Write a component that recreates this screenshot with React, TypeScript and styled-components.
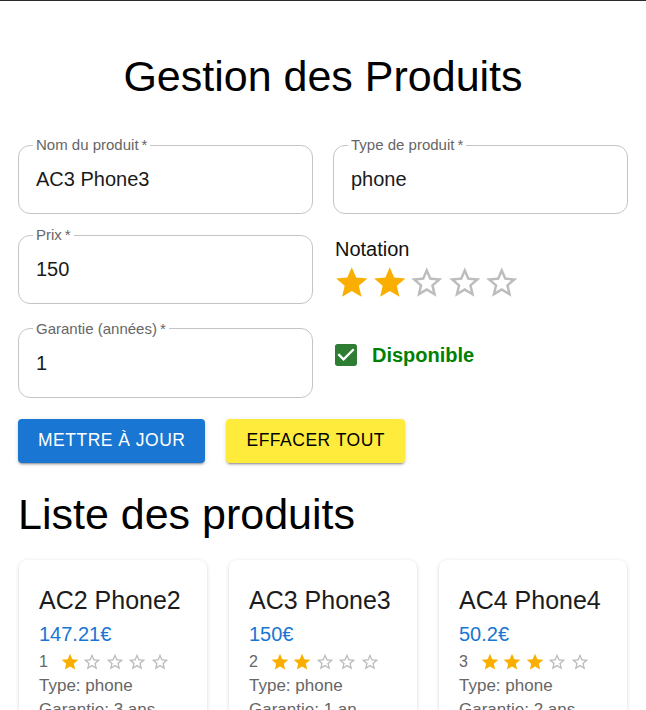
import React from "react";
import styled, { createGlobalStyle } from "styled-components";

const Global = createGlobalStyle`
  html, body { margin: 0; padding: 0; background: #fff; }
  body {
    border-top: 1px solid #2b2b2b;
    font-family: "Liberation Sans", Arial, sans-serif;
    color: #000;
  }
  * { box-sizing: border-box; }
  input, button, legend { font-family: "Liberation Sans", Arial, sans-serif; }
`;

const Page = styled.main`
  width: 646px;
  padding: 0 18px 40px;
`;

const Title = styled.h1`
  margin: 51px 0 0;
  font-size: 43px;
  line-height: 49px;
  font-weight: normal;
  text-align: center;
`;

const FormGrid = styled.div`
  display: grid;
  grid-template-columns: 1fr 1fr;
  align-items: start;
  column-gap: 20px;
  row-gap: 12px;
  margin-top: 35px;
`;

const Field = styled.fieldset`
  margin: 0;
  min-width: 0;
  border: 1px solid #c4c4c4;
  border-radius: 12px;
  padding: 0 14px 22px;
`;

const Legend = styled.legend`
  padding: 0 3px;
  font-size: 15px;
  line-height: 18px;
  color: #666;
`;

const Input = styled.input`
  display: block;
  width: 100%;
  height: 24px;
  margin: 13px 0 0;
  padding: 0 3px;
  border: 0;
  outline: 0;
  background: transparent;
  font-family: "Liberation Sans", Arial, sans-serif;
  font-size: 20px;
  line-height: 24px;
  color: #1a1a1a;
`;

const RatingCell = styled.div`
  padding: 12px 0 6px;
  display: flex;
  flex-direction: column;
  gap: 3px;
`;

const RatingLabel = styled.div`
  padding-left: 2px;
  font-size: 20px;
  line-height: 23px;
  color: #111;
`;

const StarRow = styled.div<{ $gap: number }>`
  display: flex;
  align-items: center;
  gap: ${(p) => p.$gap}px;
`;

const CheckCell = styled.label`
  padding: 24px 0 0 2px;
  display: flex;
  align-items: flex-start;
  gap: 15px;
`;

const CheckText = styled.span`
  font-size: 20px;
  line-height: 22px;
  font-weight: bold;
  color: #008000;
`;

const Actions = styled.div`
  display: flex;
  gap: 21px;
  margin-top: 21px;
`;

const Button = styled.button<{ $variant: "primary" | "warning" }>`
  height: 44px;
  padding: 0 20px;
  border: 0;
  border-radius: 4px;
  font-family: "Liberation Sans", Arial, sans-serif;
  font-size: 17.5px;
  letter-spacing: 0.5px;
  text-transform: uppercase;
  cursor: pointer;
  background: ${(p) => (p.$variant === "primary" ? "#1976d2" : "#ffeb3b")};
  color: ${(p) => (p.$variant === "primary" ? "#fff" : "#000")};
  box-shadow: 0 3px 1px -2px rgba(0, 0, 0, 0.2), 0 2px 2px 0 rgba(0, 0, 0, 0.14),
    0 1px 5px 0 rgba(0, 0, 0, 0.12);
`;

const SectionTitle = styled.h2`
  margin: 27px 0 0;
  font-size: 43px;
  line-height: 49px;
  font-weight: normal;
`;

const CardGrid = styled.div`
  display: grid;
  grid-template-columns: repeat(3, 188px);
  gap: 22px;
  margin-top: 21px;
  padding-left: 1px;
`;

const Card = styled.article`
  background: #fff;
  border-radius: 8px;
  padding: 26px 20px 20px;
  box-shadow: 0 2px 1px -1px rgba(0, 0, 0, 0.2), 0 1px 1px 0 rgba(0, 0, 0, 0.14),
    0 1px 4px 0 rgba(0, 0, 0, 0.14);
`;

const CardTitle = styled.h3`
  margin: 0;
  font-size: 25px;
  line-height: 29px;
  font-weight: normal;
  color: #1c1c1c;
`;

const Price = styled.div`
  margin-top: 8px;
  font-size: 20px;
  line-height: 23px;
  color: #1976d2;
`;

const CardRating = styled.div`
  margin-top: 6px;
  height: 20px;
  display: flex;
  align-items: center;
  gap: 12px;
  font-size: 16px;
  color: #666;
`;

const Info = styled.div`
  margin-top: 4px;
  font-size: 17px;
  line-height: 20px;
  color: #666;
`;

const FILLED = "M12 17.27L18.18 21l-1.64-7.03L22 9.24l-7.19-.61L12 2 9.19 8.63 2 9.24l5.46 4.73L5.82 21z";
const EMPTY =
  "M22 9.24l-7.19-.62L12 2 9.19 8.63 2 9.24l5.46 4.73L5.82 21 12 17.27 18.18 21l-1.63-7.03L22 9.24zM12 15.4l-3.76 2.27 1-4.28-3.32-2.88 4.38-.38L12 6.1l1.71 4.04 4.38.38-3.32 2.88 1 4.28L12 15.4z";

function Star({ filled, size }: { filled: boolean; size: number }) {
  return (
    <svg width={size} height={size} viewBox="0 0 24 24" aria-hidden="true">
      <path d={filled ? FILLED : EMPTY} fill={filled ? "#faaf00" : "#bdbdbd"} />
    </svg>
  );
}

function Stars({ value, size, gap }: { value: number; size: number; gap: number }) {
  return (
    <StarRow $gap={gap}>
      {[1, 2, 3, 4, 5].map((i) => (
        <Star key={i} filled={i <= value} size={size} />
      ))}
    </StarRow>
  );
}

function CheckIcon() {
  return (
    <svg width="22" height="22" viewBox="3 3 18 18" aria-hidden="true">
      <path
        fill="#2e7d32"
        d="M19 3H5c-1.11 0-2 .9-2 2v14c0 1.1.89 2 2 2h14c1.11 0 2-.9 2-2V5c0-1.1-.89-2-2-2zm-9 14l-5-5 1.41-1.41L10 14.17l7.59-7.59L19 8l-9 9z"
      />
    </svg>
  );
}

function TextField({ label, value }: { label: string; value: string }) {
  return (
    <Field>
      <Legend>{label}{"\u2009*"}</Legend>
      <Input defaultValue={value} />
    </Field>
  );
}

const products = [
  { name: "AC2 Phone2", price: "147.21€", rating: 1, type: "phone", warranty: "3 ans" },
  { name: "AC3 Phone3", price: "150€", rating: 2, type: "phone", warranty: "1 an" },
  { name: "AC4 Phone4", price: "50.2€", rating: 3, type: "phone", warranty: "2 ans" },
];

export default function App() {
  return (
    <>
      <Global />
      <Page>
        <Title>Gestion des Produits</Title>
        <FormGrid>
          <TextField label="Nom du produit" value="AC3 Phone3" />
          <TextField label="Type de produit" value="phone" />
          <TextField label="Prix" value="150" />
          <RatingCell>
            <RatingLabel>Notation</RatingLabel>
            <Stars value={2} size={37.5} gap={0} />
          </RatingCell>
          <TextField label="Garantie (années)" value="1" />
          <CheckCell>
            <CheckIcon />
            <CheckText>Disponible</CheckText>
          </CheckCell>
        </FormGrid>
        <Actions>
          <Button $variant="primary">Mettre à jour</Button>
          <Button $variant="warning">Effacer tout</Button>
        </Actions>
        <SectionTitle>Liste des produits</SectionTitle>
        <CardGrid>
          {products.map((p) => (
            <Card key={p.name}>
              <CardTitle>{p.name}</CardTitle>
              <Price>{p.price}</Price>
              <CardRating>
                <span>{p.rating}</span>
                <Stars value={p.rating} size={20} gap={2.5} />
              </CardRating>
              <Info>Type: {p.type}</Info>
              <Info>Garantie: {p.warranty}</Info>
            </Card>
          ))}
        </CardGrid>
      </Page>
    </>
  );
}
